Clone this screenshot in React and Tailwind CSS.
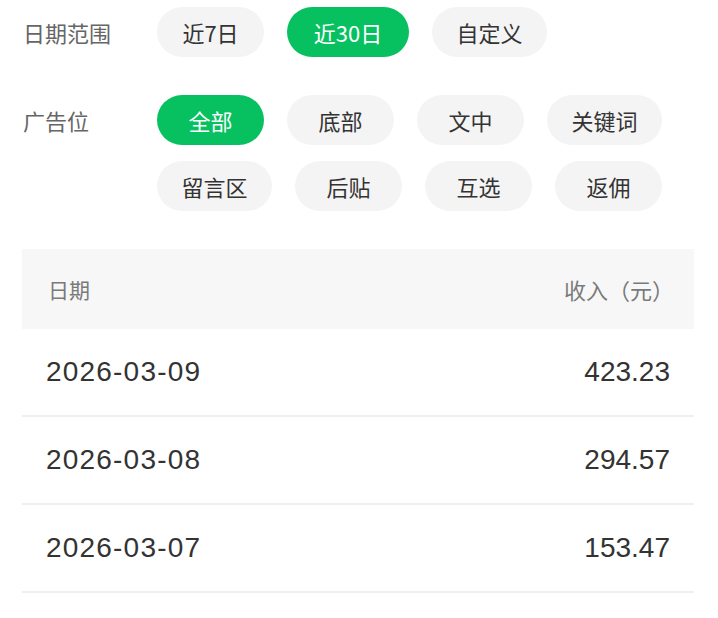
import React from "react";

const cjk = { fontFamily: '"Noto Sans CJK SC", "Noto Sans", sans-serif' };
const num = { fontFamily: '"Liberation Sans", "Noto Sans CJK SC", sans-serif' };

function Chip({ label, active, w }) {
  return (
    <div
      className={`${w} h-[50px] rounded-full flex items-center justify-center text-[22px] leading-none ${
        active ? "bg-[#07c160] text-white" : "bg-[#f4f4f4] text-[#333333]"
      }`}
      style={cjk}
    >
      {label}
    </div>
  );
}

const rows = [
  ["2026-03-09", "423.23"],
  ["2026-03-08", "294.57"],
  ["2026-03-07", "153.47"],
];

export default function App() {
  return (
    <div className="w-[718px] h-[618px] bg-white overflow-hidden">
      <div className="pt-[7px] pl-[23px]">
        <div className="flex items-center">
          <div className="w-[134px] text-[22px] leading-none text-[#666666]" style={cjk}>
            日期范围
          </div>
          <div className="flex gap-x-[23px]">
            <Chip label="近7日" w="w-[107px]" />
            <Chip label="近30日" w="w-[122px]" active />
            <Chip label="自定义" w="w-[115px]" />
          </div>
        </div>
        <div className="flex items-start mt-[38px]">
          <div className="w-[134px] h-[50px] flex items-center text-[22px] leading-none text-[#666666]" style={cjk}>
            广告位
          </div>
          <div className="w-[510px] flex flex-wrap gap-x-[23px] gap-y-[16px]">
            <Chip label="全部" w="w-[107px]" active />
            <Chip label="底部" w="w-[107px]" />
            <Chip label="文中" w="w-[107px]" />
            <Chip label="关键词" w="w-[115px]" />
            <Chip label="留言区" w="w-[115px]" />
            <Chip label="后贴" w="w-[107px]" />
            <Chip label="互选" w="w-[107px]" />
            <Chip label="返佣" w="w-[107px]" />
          </div>
        </div>
      </div>
      <div className="mt-[38px] mx-[22px] w-[672px]">
        <div className="h-[80px] bg-[#f7f7f7] flex items-center justify-between pl-[26px] pr-[20px] leading-none text-[#7a7a7a]" style={cjk}>
          <span className="text-[21px]">日期</span>
          <span className="text-[22px]">收入（元）</span>
        </div>
        {rows.map(([d, v]) => (
          <div key={d} className="h-[88px] border-b-2 border-[#f0f0f0] flex items-center justify-between pl-[24px] pr-[24px] text-[28px] leading-none text-[#333333]" style={num}>
            <span className="tracking-[1.2px]">{d}</span>
            <span>{v}</span>
          </div>
        ))}
      </div>
    </div>
  );
}
